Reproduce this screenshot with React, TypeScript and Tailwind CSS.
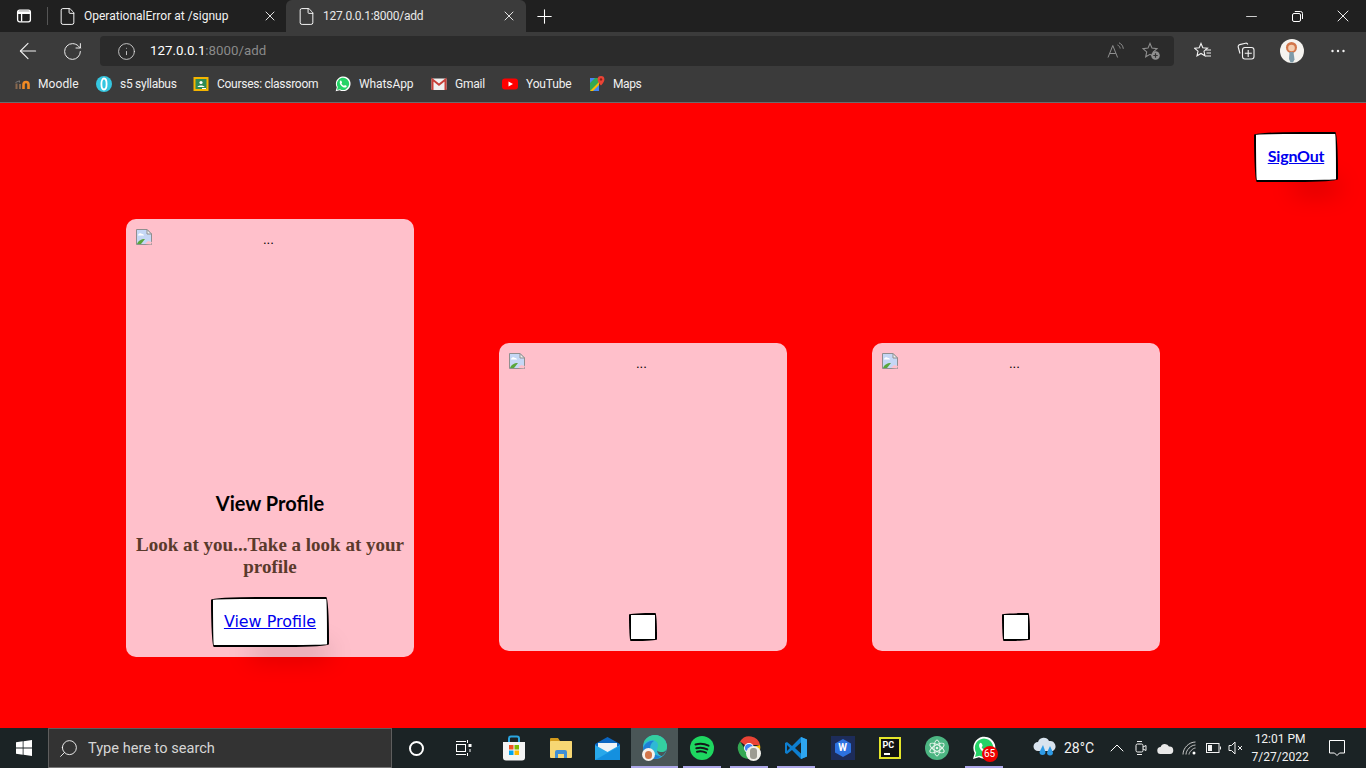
import React from "react";
import { ArrowLeft, RotateCw, Info, File, Plus, X, Minus, Search, ChevronUp } from "lucide-react";

const ui = { fontFamily: '"Roboto","Liberation Sans",sans-serif' };

function SidebarIcon() {
  return (
    <svg width="16" height="16" viewBox="0 0 16 16" fill="none" stroke="#fff" strokeWidth="1.3">
      <rect x="1.6" y="2.2" width="12.8" height="11.6" rx="2" />
      <path d="M2 5.4h12M5.6 5.4v8" />
      <path d="M2 3.2h12v2.2H2z" fill="#fff" stroke="none" />
    </svg>
  );
}

function Tab({ title, active, width, text }: { title: string; active?: boolean; width: string; text: string }) {
  return (
    <div className={`${width} ${active ? "bg-[#3b3b3b] rounded-t-[6px] text-[#e8e8e8]" : "text-[#f2f2f2]"} h-[32px] flex items-center shrink-0`}>
      <File size={19} strokeWidth={1.2} className={`${active ? "ml-[11px]" : "ml-[10px]"} text-white shrink-0`} />
      <span className={`ml-[7px] ${text} flex-1 text-[12px] whitespace-nowrap leading-none`}>{title}</span>
      <X size={16} strokeWidth={1.4} className={`${active ? "mr-[9px]" : "mr-[8px]"} text-[#efefef] shrink-0`} />
    </div>
  );
}

function Bm({ icon, label, w, gap, track }: { icon: React.ReactNode; label: string; w: string; gap: string; track: string }) {
  return (
    <div className={`flex items-center ${gap} shrink-0`}>
      <div className="w-[16px] h-[16px] flex items-center justify-center">{icon}</div>
      <span className={`${w} ${track} text-[12px] text-[#f0f0f0] whitespace-nowrap leading-none`}>{label}</span>
    </div>
  );
}

const MoodleIcon = (
  <svg width="16" height="16" viewBox="0 0 16 16">
    <path d="M0.5 6.500 L4.500 4.800 V6.500" stroke="#777" strokeWidth="1" fill="none" />
    <path d="M1.500 7.500v5.500M5 8V13" stroke="#8a6a50" strokeWidth="2" />
    <path d="M8.500 13V8.500a2 2 0 0 1 5 0V13" stroke="#f08a24" strokeWidth="2.600" fill="none" />
  </svg>
);
const S5Icon = (
  <svg width="16" height="16" viewBox="0 0 16 16">
    <circle cx="8" cy="8" r="8" fill="#35c6e0" />
    <ellipse cx="8" cy="8" rx="2.600" ry="5.500" fill="none" stroke="#fff" strokeWidth="1.800" />
  </svg>
);
const ClassroomIcon = (
  <svg width="16" height="16" viewBox="0 0 16 16">
    <rect x="0.500" y="1" width="15" height="14" fill="#f4b400" />
    <rect x="2.500" y="3" width="11" height="10" fill="#2e8b57" />
    <circle cx="8" cy="6.500" r="1.600" fill="#fff" />
    <path d="M4.500 11c.5-2 6.500-2 7 0z" fill="#fff" />
    <rect x="9" y="12" width="4" height="1" fill="#fff" />
  </svg>
);
function WaIcon({ size = 16 }: { size?: number }) {
  return (
    <svg width={size} height={size} viewBox="0 0 24 24">
      <path d="M1 23l1.700-6A11 11 0 1 1 7 21.300z" fill="#fff" />
      <path d="M3 21l1.200-4.400A9.200 9.200 0 1 1 7.500 19.800z" fill="#25d366" />
      <path d="M8.800 6.800c-.6 0-1.700 1-1.700 2.800 0 3 3.800 7.500 7.600 7.800 1.600 0 2.900-1.100 2.900-2.200 0-.5-2.200-1.800-2.700-1.700-.4.100-.9 1.200-1.300 1.200-1 0-3.600-2.300-3.900-3.400 0-.4.900-1 .9-1.500 0-.4-1-3-1.800-3z" fill="#fff" />
    </svg>
  );
}
const GmailIcon = (
  <svg width="16" height="16" viewBox="0 0 16 16">
    <rect x="0.500" y="2.500" width="15" height="11.500" rx="1" fill="#f1f1f1" />
    <path d="M1.500 14V3.500L8 8.800l6.500-5.300V14" fill="none" stroke="#c8413a" strokeWidth="2" />
  </svg>
);
const YtIcon = (
  <svg width="16" height="16" viewBox="0 0 16 16">
    <rect x="0" y="2.500" width="16" height="11" rx="3" fill="#ff0000" />
    <path d="M6.500 5.500 11 8l-4.500 2.500z" fill="#fff" />
  </svg>
);
const MapsIcon = (
  <svg width="16" height="16" viewBox="0 0 16 16">
    <path d="M1 2h9v13H1z" fill="#34a853" />
    <path d="M1 15 10 6v9z" fill="#fbbc04" />
    <path d="M1 2h5L1 7z" fill="#4285f4" />
    <path d="M4 15l6-6v6z" fill="#4285f4" />
    <path d="M12 0a3.400 3.400 0 0 0-3.400 3.400c0 2.400 3.400 6 3.400 6s3.400-3.600 3.400-6A3.400 3.400 0 0 0 12 0z" fill="#ea4335" />
    <circle cx="12" cy="3.400" r="1.200" fill="#8c1f17" />
  </svg>
);

function ReadAloud() {
  return (
    <svg width="18" height="18" viewBox="0 0 18 18" fill="none" stroke="#8f8f8f" strokeWidth="1">
      <path d="M1 15.500 5.800 3.500l4.800 12M2.800 11.500h6" />
      <path d="M10.500 3c1.500.6 2.500 2 2.700 3.500M12 .8c2.500 1 4 3.200 4.300 6" />
    </svg>
  );
}
function FavAdd() {
  return (
    <svg width="19" height="19" viewBox="0 0 19 19" fill="none" stroke="#8f8f8f" strokeWidth="1.100">
      <path d="M8 1.500l2 4.600 5 .5-3.700 3.300 1 4.900L8 12.300l-4.300 2.500 1-4.900L1 6.600l5-.5z" />
      <circle cx="13.500" cy="13.500" r="4.300" fill="#8f8f8f" stroke="none" />
      <path d="M13.500 11.300v4.400M11.300 13.500h4.400" stroke="#333" strokeWidth="1.200" />
    </svg>
  );
}
function FavList() {
  return (
    <svg width="18" height="18" viewBox="0 0 18 18" fill="none" stroke="#f2f2f2" strokeWidth="1.100">
      <path d="M7 1.500l1.800 4.300 4.700.4-3.500 3 1 4.600L7 11.500l-4 2.300 1-4.600-3.500-3 4.700-.4z" />
      <path d="M11.500 8h5.500M12.500 11h4.500M11.500 14h5.500" />
    </svg>
  );
}
function Collections() {
  return (
    <svg width="18" height="18" viewBox="0 0 18 18" fill="none" stroke="#f2f2f2" strokeWidth="1.100">
      <path d="M3 11.500 1.200 5a2 2 0 0 1 1.500-2.400L8.500 1.200c1-.2 2 .2 2.300 1.300" />
      <rect x="5.500" y="5.500" width="11.500" height="11.500" rx="2.500" />
      <path d="M11.200 8v7M7.800 11.300h7" />
    </svg>
  );
}
function Avatar() {
  return (
    <div className="w-[24px] h-[24px] rounded-full bg-[#f5f3ef] overflow-hidden flex items-center justify-center">
      <svg width="24" height="24" viewBox="0 0 24 24">
        <circle cx="11.500" cy="8.500" r="5.500" fill="#d2764a" />
        <circle cx="11.500" cy="9" r="3.300" fill="#f3cdb0" />
        <path d="M9.500 13h4l1 7.500-1.500 3h-2.500L9 20z" fill="#7e9aa8" />
      </svg>
    </div>
  );
}

function RestoreIcon() {
  return (
    <svg width="11" height="11" viewBox="0 0 11 11" fill="none" stroke="#fff" strokeWidth="1">
      <rect x="0.500" y="2.500" width="8" height="8" rx="1.500" />
      <path d="M2.800 .5H8.500a2 2 0 0 1 2 2V8" />
    </svg>
  );
}

function Browser() {
  return (
    <div style={ui} className="shrink-0">
      <div className="h-[32px] bg-[#202020] flex items-start">
        <div className="w-[48px] h-[32px] flex items-center relative">
          <div className="ml-[16px]"><SidebarIcon /></div>
          <div className="absolute right-0 top-[7px] h-[18px] w-px bg-[#555]" />
        </div>
        <Tab title="OperationalError at /signup" width="w-[238px]" text="tracking-normal" />
        <Tab title="127.0.0.1:8000/add" active width="w-[240px]" text="tracking-[-0.25px]" />
        <div className="w-[36px] h-[32px] flex items-center justify-center">
          <Plus size={23} strokeWidth={1.1} className="text-white" />
        </div>
        <div className="flex-1" />
        <div className="w-[46px] h-[32px] flex items-center justify-center"><Minus size={17} strokeWidth={1.1} className="text-white" /></div>
        <div className="w-[46px] h-[32px] flex items-center justify-center"><RestoreIcon /></div>
        <div className="w-[46px] h-[32px] flex items-center justify-center"><X size={20} strokeWidth={1.1} className="text-white" /></div>
      </div>
      <div className="h-[34px] bg-[#3b3b3b] flex items-end">
        <div className="w-[56px] h-[30px] flex items-center justify-center"><ArrowLeft size={26} strokeWidth={1} className="text-[#f2f2f2]" /></div>
        <div className="w-[32px] h-[30px] flex items-center justify-center"><RotateCw size={21} strokeWidth={1.1} className="text-[#f2f2f2]" /></div>
        <div className="ml-[12px] w-[1074px] h-[30px] bg-[#2b2b2b] rounded-[4px] flex items-center">
          <Info size={19} strokeWidth={1} className="ml-[17px] text-[#e6e6e6]" />
          <span className="ml-[14px] text-[13.300px] text-white leading-none whitespace-nowrap">127.0.0.1<span className="text-[#8a8a8a]">:8000/add</span></span>
          <div className="flex-1" />
          <ReadAloud />
          <div className="ml-[17px] mr-[13px]"><FavAdd /></div>
        </div>
        <div className="h-[30px] flex items-center">
          <div className="ml-[20px]"><FavList /></div>
          <div className="ml-[25px]"><Collections /></div>
          <div className="ml-[25px]"><Avatar /></div>
          <svg width="14" height="4" viewBox="0 0 14 4" fill="#f2f2f2" className="ml-[27px]">
            <circle cx="1.500" cy="2" r="1.200" />
            <circle cx="7" cy="2" r="1.200" />
            <circle cx="12.500" cy="2" r="1.200" />
          </svg>
        </div>
      </div>
      <div className="h-[37px] bg-[#3b3b3b] border-b border-[#6b6b6b] flex items-center gap-[17px] pl-[15px]">
        <Bm icon={MoodleIcon} label="Moodle" w="w-[41px]" gap="gap-[7px]" track="tracking-[0.1px]" />
        <Bm icon={S5Icon} label="s5 syllabus" w="w-[56px]" gap="gap-[8px]" track="tracking-[-0.28px]" />
        <Bm icon={ClassroomIcon} label="Courses: classroom" w="w-[101px]" gap="gap-[8px]" track="tracking-[-0.28px]" />
        <Bm icon={<WaIcon />} label="WhatsApp" w="w-[55px]" gap="gap-[8px]" track="tracking-[-0.1px]" />
        <Bm icon={GmailIcon} label="Gmail" w="w-[30px]" gap="gap-[8px]" track="tracking-[-0.2px]" />
        <Bm icon={YtIcon} label="YouTube" w="w-[46px]" gap="gap-[8px]" track="tracking-[-0.15px]" />
        <Bm icon={MapsIcon} label="Maps" w="w-[28px]" gap="gap-[8px]" track="tracking-[-0.4px]" />
      </div>
    </div>
  );
}

function BrokenImg({ dots }: { dots: string }) {
  return (
    <div className="flex items-start h-[16px]">
      <svg width="16" height="16" viewBox="0 0 16 16" className="shrink-0">
        <path d="M.5.500H11L15.500 5v10.500H.5z" fill="#c5d7f5" stroke="#8f8f8f" />
        <path d="M11 .5V5h4.500z" fill="#f0f0f0" stroke="#8f8f8f" />
        <path d="M2 6c1-2 3-2 4-1 1 0 2 .5 2 1.500H2z" fill="#fff" />
        <path d="M1 15c1-3 4-5 8-5l-4 5z" fill="#5aa63c" />
        <path d="M15 15.500 9 15l3-3 4 1z" fill="#ffc0cb" />
      </svg>
      <span className={`${dots} mt-[3px] text-[13px] leading-[16px] text-black`} style={{ fontFamily: '"Liberation Sans",sans-serif' }}>...</span>
    </div>
  );
}

const sketch = "bg-white border-2 border-black rounded-[255px_15px_225px_15px/15px_225px_15px_255px] shadow-[20px_30px_24px_-20px_#00000040]";

function EmptyCard() {
  return (
    <div className="w-[288px] h-[308px] mt-[124px] bg-[#ffc0cb] rounded-[10px] px-[10px] pt-[10px] pb-[10px] flex flex-col items-stretch shrink-0">
      <BrokenImg dots="ml-[111px]" />
      <div className="flex-1" />
      <div className={`${sketch} w-[28px] h-[28px] self-center`} />
    </div>
  );
}

function Taskcell({ children, w = "w-[47px]", on, active }: { children: React.ReactNode; w?: string; on?: boolean; active?: boolean }) {
  return (
    <div className={`${w} h-[40px] relative flex items-center justify-center shrink-0 ${active ? "bg-[#4a5657]" : ""}`}>
      {children}
      {on && <div className={`absolute bottom-0 h-[2px] bg-[#aca7e8] ${active ? "left-0 right-0" : "left-[5px] right-[4px]"}`} />}
    </div>
  );
}

function Taskbar() {
  return (
    <div style={ui} className="h-[40px] shrink-0 bg-[#1b2325] flex items-center text-white">
      <div className="w-[48px] h-[40px] flex items-center justify-center">
        <svg width="16" height="16" viewBox="0 0 16 16" fill="#fff">
          <path d="M0 2.300 6.700 1.300v6.300H0zM7.500 1.200 16 0v7.600H7.500zM0 8.400h6.700v6.300L0 13.700zM7.500 8.400H16V16l-8.500-1.200z" />
        </svg>
      </div>
      <div className="w-[344px] h-[40px] bg-[#333333] border border-[#5e5e5e] border-b-[#777] flex items-center">
        <Search size={21} strokeWidth={1} className="ml-[9px] text-white -scale-x-100" />
        <span className="ml-[9px] text-[14.600px] text-[#d6d6d6] leading-none whitespace-nowrap">Type here to search</span>
      </div>
      <Taskcell w="w-[48px]">
        <div className="w-[15px] h-[15px] rounded-full border-2 border-white" />
      </Taskcell>
      <Taskcell w="w-[46px]">
        <svg width="17" height="16" viewBox="0 0 17 16" fill="none" stroke="#fff" strokeWidth="1">
          <path d="M1 1.500h10M1 14.500h10M12.500 0v3M12.500 13v3" />
          <rect x="1.500" y="4.500" width="9" height="7" />
          <rect x="13.500" y="4" width="3" height="3" fill="#fff" stroke="none" />
          <path d="M15 9v3" />
        </svg>
      </Taskcell>
      <div className="w-[4px] shrink-0" />
      <Taskcell>
        <svg width="24" height="26" viewBox="0 0 24 26">
          <path d="M7 8V3.500a2 2 0 0 1 2-2h6a2 2 0 0 1 2 2V8" fill="none" stroke="#2aa5e0" strokeWidth="2" />
          <path d="M1 7h22v15.500a3 3 0 0 1-3 3H4a3 3 0 0 1-3-3z" fill="#f4f4f4" />
          <rect x="7" y="10" width="4.500" height="4.500" fill="#f25022" />
          <rect x="12.500" y="10" width="4.500" height="4.500" fill="#7fba00" />
          <rect x="7" y="15.500" width="4.500" height="4.500" fill="#00a4ef" />
          <rect x="12.500" y="15.500" width="4.500" height="4.500" fill="#ffb900" />
        </svg>
      </Taskcell>
      <Taskcell>
        <svg width="22" height="20" viewBox="0 0 22 20">
          <path d="M0 1a1 1 0 0 1 1-1h7l2 3h11a1 1 0 0 1 1 1v2H0z" fill="#d39a1c" />
          <rect x="0" y="3" width="22" height="17" rx="1" fill="#f7d774" />
          <path d="M5 20v-6a2 2 0 0 1 2-2h8a2 2 0 0 1 2 2v6h-3v-4H8v4z" fill="#3f8fd6" />
        </svg>
      </Taskcell>
      <Taskcell>
        <svg width="25" height="23" viewBox="0 0 25 23">
          <path d="M0 7 12.500 0 25 7v16H0z" fill="#0a66c2" />
          <path d="M3 6h19v6l-9.500 5L3 12z" fill="#eef3f7" />
          <path d="M0 8l12.500 7L25 8v15H0z" fill="#28a8ea" />
          <path d="M0 23 25 9v14z" fill="#1490df" />
        </svg>
      </Taskcell>
      <Taskcell on active>
        <div className="relative w-[24px] h-[24px] -mt-[2px]">
          <svg width="24" height="24" viewBox="0 0 24 24">
            <circle cx="12" cy="12" r="12" fill="#2fb8d6" />
            <path d="M12 0a12 12 0 0 1 12 12c0 3-2 5-5 5-3 0-5-1-5-2 0-2 1-3 1-5 0-3-3-5-7-5C5 5 2 7 .4 9 1.500 4 6 0 12 0z" fill="#34cfa0" />
            <path d="M12 24C6 24 1 20 0 13c2-5 7-8 11-7-3 2-5 6-3 10 2 3 6 5 10 5.500-2 1.500-4 2.500-6 2.500z" fill="#1f7ed6" />
            <path d="M24 12c0 3-2 5-5 5-2 0-4-.5-5-1.500.5 3 3 5.500 5 5.500 3-2 5-5.500 5-9z" fill="#4a5657" />
          </svg>
          <div className="absolute left-[-1px] top-[13px] w-[13px] h-[13px] rounded-full bg-[#f5f1ec] flex items-center justify-center">
            <div className="w-[7px] h-[8px] rounded-full bg-[#d2764a]" />
          </div>
        </div>
      </Taskcell>
      <Taskcell on>
        <svg width="24" height="24" viewBox="0 0 24 24">
          <circle cx="12" cy="12" r="12" fill="#1ed760" />
          <path d="M5.500 8.500c4-1 9-.8 13 1.200M6.300 12.200c3.500-.8 7.700-.5 11 1.200M7 15.700c3-.7 6.300-.4 9 1" fill="none" stroke="#14181a" strokeWidth="2" strokeLinecap="round" />
        </svg>
      </Taskcell>
      <Taskcell on>
        <div className="relative w-[24px] h-[24px]">
          <svg width="24" height="24" viewBox="0 0 24 24">
            <path d="M12 12 3 5.500A11 11 0 0 1 23 9H12z" fill="#ea4335" />
            <path d="M12 12 23 9a11 11 0 0 1-4 11z" fill="#fbbc05" />
            <path d="M12 23A11 11 0 0 1 3 5.500L10 16z" fill="#34a853" />
            <circle cx="12" cy="12" r="5" fill="#fff" />
            <circle cx="12" cy="12" r="4" fill="#4285f4" />
          </svg>
          <div className="absolute left-[9px] top-[10px] w-[15px] h-[15px] rounded-full bg-[#f0f0ea] flex items-center justify-center">
            <div className="w-[7px] h-[11px] rounded-[3px] bg-[#9c9c92]" />
          </div>
        </div>
      </Taskcell>
      <Taskcell on>
        <svg width="24" height="24" viewBox="0 0 24 24">
          <path d="M17 1 8 10 3 6 1 7v10l2 1 5-4 9 9 6-2.500V3.500z" fill="#0e7fd0" />
          <path d="M17 6.500 11 12l6 5.500z" fill="#1b2325" />
          <path d="M3 9v6l3-3z" fill="#1b2325" />
          <path d="M17 1l6 2.500v17L17 23z" fill="#2ea6f0" />
        </svg>
      </Taskcell>
      <Taskcell>
        <div className="relative w-[24px] h-[24px] bg-[#1d2c5a] flex items-center justify-center">
          <svg width="16" height="18" viewBox="0 0 16 18" className="absolute left-[4px] top-[3px]">
            <path d="M8 0l8 4.500v9L8 18l-8-4.500v-9z" fill="#2d72e0" />
          </svg>
          <span className="relative text-[10px] font-bold text-white leading-none">W</span>
        </div>
      </Taskcell>
      <Taskcell>
        <div className="w-[22px] h-[22px] bg-[#e4e52a] p-[2px]">
          <div className="w-full h-full bg-[#111] relative">
            <span className="absolute left-[2px] top-[2px] text-[9px] font-bold text-white leading-none">PC</span>
            <div className="absolute left-[3px] bottom-[2px] w-[6px] h-[2px] bg-white" />
          </div>
        </div>
      </Taskcell>
      <Taskcell>
        <svg width="24" height="24" viewBox="0 0 24 24">
          <circle cx="12" cy="12" r="12" fill="#4cb582" />
          <g fill="none" stroke="#e4f5ea" strokeWidth="1">
            <ellipse cx="12" cy="12" rx="8" ry="3.200" transform="rotate(30 12 12)" />
            <ellipse cx="12" cy="12" rx="8" ry="3.200" transform="rotate(-30 12 12)" />
            <ellipse cx="12" cy="12" rx="3" ry="8" />
          </g>
          <circle cx="12" cy="12" r="1.300" fill="#e4f5ea" />
        </svg>
      </Taskcell>
      <Taskcell on>
        <div className="relative w-[24px] h-[24px]">
          <WaIcon size={24} />
          <div className="absolute left-[10px] top-[10px] w-[16px] h-[16px] rounded-full bg-[#f00000] flex items-center justify-center">
            <span className="text-[10px] text-white leading-none">65</span>
          </div>
        </div>
      </Taskcell>
      <div className="w-[26px] shrink-0" />
      <svg width="25" height="22" viewBox="0 0 25 22" className="shrink-0">
        <path d="M5 14a4.500 4.500 0 0 1 0-9 6 6 0 0 1 11-1 5.500 5.500 0 0 1 4 10z" fill="#d9e3ee" />
        <path d="M10 8l-3.500 7a3 3 0 0 0 6 0z" fill="#2e9be6" />
        <path d="M17 9l-3 6.500a3 3 0 0 0 6 0z" fill="#2e9be6" />
      </svg>
      <span className="ml-[6px] text-[14px] text-[#f2f2f2] leading-none whitespace-nowrap">28°C</span>
      <ChevronUp size={24} strokeWidth={1} className="ml-[11px] text-white shrink-0" />
      <svg width="12" height="18" viewBox="0 0 12 18" fill="none" stroke="#f2f2f2" strokeWidth="1" className="ml-[6px] shrink-0">
        <rect x="1" y="5" width="7" height="8" rx="1.500" />
        <path d="M8 8l3-1.500v5L8 10M2 2.500h5M2 15.500h5" />
      </svg>
      <svg width="17" height="11" viewBox="0 0 17 11" className="ml-[10px] shrink-0">
        <path d="M4 11a3.500 3.500 0 0 1-.4-7A4.500 4.500 0 0 1 12 3.600a3.200 3.200 0 0 1 1 7.400z" fill="#e8e8e8" />
      </svg>
      <svg width="15" height="14" viewBox="0 0 15 14" fill="none" stroke="#c9c9c9" strokeWidth="1" className="ml-[8px] shrink-0">
        <path d="M1 13.500C1 7 7 1 13.500 1M4 13.500C4 9 9 4 13.500 4M7 13.500C7 11 11 7 13.500 7" />
        <circle cx="12" cy="12" r="1.500" fill="#fff" stroke="none" />
      </svg>
      <svg width="15" height="10" viewBox="0 0 15 10" fill="none" stroke="#f2f2f2" strokeWidth="1" className="ml-[9px] shrink-0">
        <rect x="0.500" y="0.500" width="12.500" height="9" />
        <rect x="2" y="2" width="4" height="6" fill="#f2f2f2" stroke="none" />
        <path d="M14.500 3.500v3" />
      </svg>
      <svg width="15" height="14" viewBox="0 0 15 14" fill="none" stroke="#f2f2f2" strokeWidth="1" className="ml-[7px] shrink-0">
        <path d="M1 4.500h2.500L7 1v12L3.500 9.500H1zM10 5l4 4M14 5l-4 4" />
      </svg>
      <div className="ml-[8px] w-[58px] flex flex-col items-center text-[12px] text-[#f2f2f2] leading-[18px] whitespace-nowrap shrink-0">
        <span>12:01 PM</span>
        <span>7/27/2022</span>
      </div>
      <svg width="16" height="16" viewBox="0 0 16 16" fill="none" stroke="#fff" strokeWidth="1" className="ml-[20px] shrink-0">
        <path d="M.5.500h15v12.500h-5L8 15.500 5.500 13h-5z" />
      </svg>
    </div>
  );
}

export default function App() {
  return (
    <div className="w-[1366px] h-[768px] flex flex-col overflow-hidden">
      <Browser />
      <main className="flex-1 bg-[#ff0000] flex flex-col min-h-0">
        <div className="flex justify-end pt-[29px] pr-[28px]">
          <div className={`${sketch} w-[84px] h-[50px] flex items-center justify-center pb-[2px]`}>
            <a href="#signout" className="text-[#0000ee] underline text-[16px] font-bold tracking-[-0.2px] leading-none" style={{ fontFamily: '"Lato",sans-serif' }}>SignOut</a>
          </div>
        </div>
        <div className="flex items-start gap-[85px] pl-[126px] mt-[37px]">
          <div className="w-[288px] h-[438px] bg-[#ffc0cb] rounded-[10px] pt-[10px] pb-[10px] flex flex-col items-center shrink-0">
            <div className="self-stretch px-[10px]"><BrokenImg dots="ml-[111px]" /></div>
            <div className="h-[246px]" />
            <h5 className="text-[20px] leading-[24px] font-bold text-black whitespace-nowrap" style={{ fontFamily: '"Lato",sans-serif' }}>View Profile</h5>
            <p className="mt-[19px] w-[284px] text-center text-[19px] leading-[22px] font-bold text-[#5a3a2c]" style={{ fontFamily: '"Liberation Serif",serif' }}>Look at you...Take a look at your profile</p>
            <div className={`${sketch} mt-[19px] w-[118px] h-[50px] flex items-center justify-center`}>
              <a href="#profile" className="text-[#0000ee] underline text-[15.900px] leading-none whitespace-nowrap" style={{ fontFamily: '"DejaVu Sans",sans-serif' }}>View Profile</a>
            </div>
          </div>
          <EmptyCard />
          <EmptyCard />
        </div>
      </main>
      <Taskbar />
    </div>
  );
}
